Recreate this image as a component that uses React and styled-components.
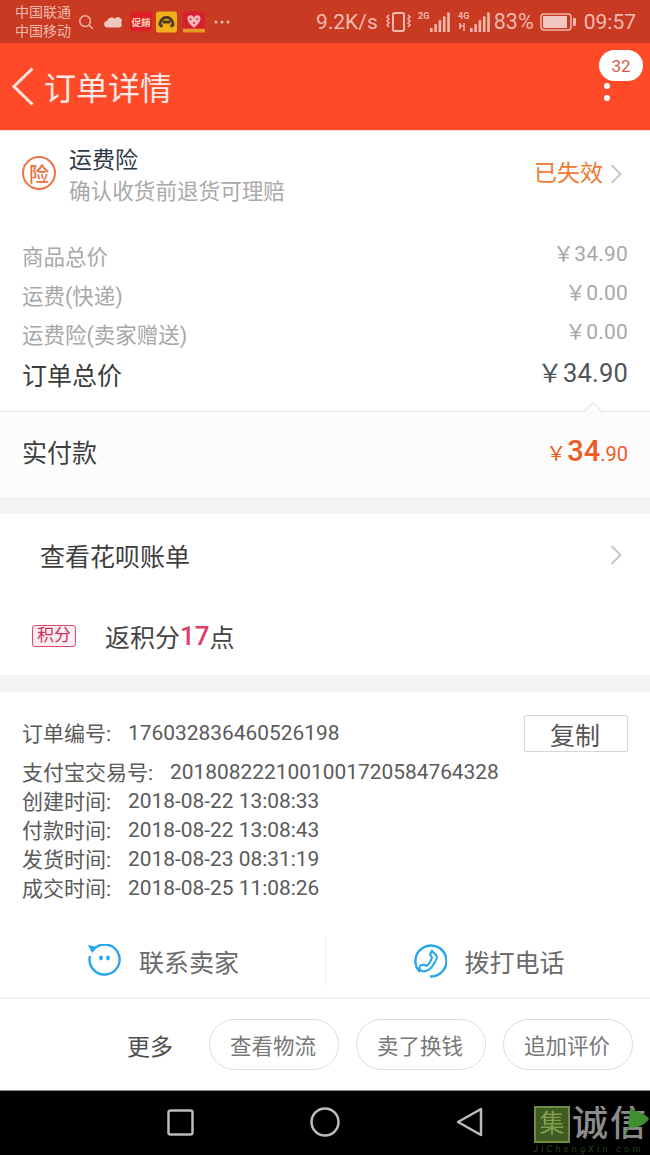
import styled, { createGlobalStyle } from "styled-components";

const GlobalStyle = createGlobalStyle`
  html, body {
    margin: 0;
    padding: 0;
    background: #fff;
    font-family: Roboto, "Noto Sans CJK SC", sans-serif;
  }
`;

const Page = styled.div`
  width: 650px;
  height: 1155px;
  overflow: hidden;
  position: relative;
  display: flex;
  flex-direction: column;
`;

const StatusBar = styled.div`
  height: 43px;
  background: #c93a23;
  color: #f0b9ae;
  display: flex;
  align-items: center;
  padding: 0 14px 0 15px;
  box-sizing: border-box;
`;

const Carriers = styled.div`
  width: 62px;
  font-size: 14px;
  line-height: 19px;
  margin-top: 1px;
  flex-shrink: 0;
`;

const StatusIcons = styled.div`
  display: flex;
  align-items: center;
  gap: 4px;
  flex: 1;
`;

const StatusText = styled.span`
  font-size: ${(p) => p.$size || "21px"};
  margin-left: ${(p) => p.$left || "0"};
  white-space: nowrap;
`;

const Header = styled.header`
  height: 87px;
  background: #fe4a29;
  display: flex;
  align-items: center;
  padding-left: 12px;
  position: relative;
`;

const Title = styled.h1`
  margin: 0 0 1px 10px;
  font-size: 32px;
  font-weight: 400;
  color: #ffe9e4;
`;

const Badge = styled.span`
  position: absolute;
  left: 599px;
  top: 7px;
  width: 44px;
  height: 31px;
  border-radius: 16px;
  background: #fff;
  color: #d9594a;
  font-size: 17px;
  display: flex;
  align-items: center;
  justify-content: center;
`;

const MenuDot = styled.i`
  position: absolute;
  left: 604px;
  top: ${(p) => p.$top}px;
  width: 6px;
  height: 6px;
  border-radius: 50%;
  background: #fff;
`;

const InsuranceRow = styled.section`
  height: 95px;
  box-sizing: border-box;
  border-top: 1px solid #fdd;
  padding: 12px 28px 0 22px;
  display: flex;
  align-items: flex-start;
`;

const RoundMark = styled.span`
  width: 34px;
  height: 34px;
  box-sizing: border-box;
  border: 2px solid #e9764a;
  border-radius: 50%;
  color: #e9703c;
  font-size: 20px;
  font-weight: 500;
  display: flex;
  align-items: center;
  justify-content: center;
  margin-top: 13px;
  flex-shrink: 0;
`;

const InsuranceText = styled.div`
  margin-left: 13px;
  flex: 1;
`;

const InsuranceName = styled.div`
  font-size: 23px;
  line-height: 33px;
  margin-top: 1px;
  color: #2e3a45;
`;

const InsuranceNote = styled.div`
  font-size: 21.6px;
  line-height: 30px;
  color: #a9a9a9;
`;

const ExpiredLink = styled.div`
  display: flex;
  align-items: center;
  gap: 7px;
  font-size: 23px;
  line-height: 34px;
  color: #ef7a33;
  margin: 14px 0 0;
`;

const PriceList = styled.section`
  height: 186px;
  box-sizing: border-box;
  padding: 11px 22px 0;
`;

const PriceRow = styled.div`
  display: flex;
  justify-content: space-between;
  align-items: center;
  height: 39px;
  font-size: ${(p) => (p.$total ? "25px" : "21.5px")};
  color: ${(p) => (p.$total ? "#3b3b3b" : "#a8a8a8")};
  margin-top: ${(p) => (p.$total ? "1px" : "0")};
`;

const Amount = styled.span`
  font-size: ${(p) => (p.$total ? "25.5px" : "21px")};
  color: ${(p) => (p.$total ? "#50555a" : "#a8a8a8")};
  margin-top: ${(p) => (p.$total ? "-6px" : "-7px")};
  letter-spacing: 0.2px;
`;

const PaidRow = styled.section`
  position: relative;
  height: 86px;
  box-sizing: border-box;
  background: #fcfcfc;
  border-top: 1px solid #e8e8e8;
  padding: 0 22px 8px;
  display: flex;
  justify-content: space-between;
  align-items: center;
  font-size: 25px;
  color: #3f3f3f;

  &::before {
    content: "";
    position: absolute;
    right: 50px;
    top: -7px;
    width: 13px;
    height: 13px;
    background: #fcfcfc;
    border-left: 1px solid #e4e4e4;
    border-top: 1px solid #e4e4e4;
    transform: rotate(45deg);
  }
`;

const PaidAmount = styled.span`
  color: #ee5a24;
  font-size: 20px;
  display: flex;
  align-items: baseline;
`;

const PaidMajor = styled.span`
  font-size: 29px;
  font-weight: 500;
  margin-left: 1px;
`;

const GapBar = styled.div`
  height: 17px;
  background: #f4f4f4;
`;

const BillRow = styled.section`
  height: 86px;
  box-sizing: border-box;
  padding: 0 28px 4px 40px;
  display: flex;
  justify-content: space-between;
  align-items: center;
  font-size: 25px;
  color: #3d3d3d;
`;

const PointsRow = styled.section`
  height: 75px;
  box-sizing: border-box;
  padding: 0 0 3px 32px;
  display: flex;
  align-items: center;
  font-size: 25px;
  color: #444;
`;

const PointsTag = styled.span`
  width: 44px;
  height: 22px;
  box-sizing: border-box;
  border: 1px solid #e2486f;
  border-radius: 3px;
  background: #fdeef2;
  color: #c9305a;
  font-size: 17px;
  line-height: 19px;
  text-align: center;
  margin-right: 29px;
`;

const PointsCount = styled.span`
  color: #e23d68;
  font-weight: 500;
  font-size: 26px;
`;

const OrderInfo = styled.section`
  height: 244px;
  box-sizing: border-box;
  padding: 22px 22px 0;
  color: #5a5a5a;
`;

const InfoRow = styled.div`
  display: flex;
  align-items: center;
  height: ${(p) => (p.$first ? "38px" : "29px")};
  margin-bottom: ${(p) => (p.$first ? "5px" : "0")};
  font-size: 21px;
  white-space: nowrap;
`;

const InfoLabel = styled.span`
  margin: 0 17px 2px 0;
`;

const InfoValue = styled.span`
  flex: 1;
  font-size: 20.9px;
`;

const CopyButton = styled.button`
  width: 104px;
  height: 37px;
  border: 1px solid #d6d6d6;
  border-radius: 2px;
  background: #fff;
  color: #555;
  font: inherit;
  font-size: 25px;
  padding: 0 2px 0 0;
`;

const ContactBar = styled.section`
  height: 63px;
  box-sizing: border-box;
  display: flex;
  border-bottom: 2px solid #f0f0f0;
  padding-bottom: 11px;
`;

const ContactItem = styled.div`
  flex: 1;
  display: flex;
  align-items: center;
  gap: 18px;
  padding-left: ${(p) => p.$left}px;
  font-size: 25px;
  color: #6b6b6b;
  border-left: ${(p) => (p.$divided ? "1px solid #ececec" : "none")};
`;

const ActionBar = styled.section`
  height: 91px;
  box-sizing: border-box;
  display: flex;
  align-items: center;
  padding-left: 127px;
`;

const MoreLabel = styled.span`
  font-size: 23px;
  color: #4e4e4e;
  width: 82px;
  flex-shrink: 0;
  white-space: nowrap;
`;

const PillButton = styled.button`
  width: 130px;
  height: 51px;
  box-sizing: border-box;
  border: 1px solid #dcdcdc;
  border-radius: 26px;
  background: #fff;
  color: #777;
  font: inherit;
  font-size: 21.5px;
  padding: 0 2px 0 0;
  margin-right: 17px;
  flex-shrink: 0;
`;

const NavBar = styled.nav`
  height: 65px;
  background: #000;
  border-top: 1px solid #888;
  box-sizing: border-box;
  display: flex;
  align-items: center;
  padding: 0 0 2px 167px;
  gap: 116px;
`;

const Watermark = styled.div`
  position: absolute;
  left: 533px;
  top: 1106px;
  width: 117px;
  height: 49px;
  overflow: hidden;
`;

const WatermarkBox = styled.span`
  position: absolute;
  left: 1px;
  top: 0;
  width: 32px;
  height: 33px;
  border: 2px solid #6f8f3f;
  background: #3f5a22;
  color: #7f9f4a;
  font-size: 25px;
  line-height: 32px;
  text-align: center;
`;

const WatermarkName = styled.span`
  position: absolute;
  left: 39px;
  top: -1px;
  font-size: 36px;
  line-height: 38px;
  color: #8c8c8c;
  font-weight: 500;
  white-space: nowrap;
  letter-spacing: 2px;
`;

const WatermarkSite = styled.span`
  position: absolute;
  left: 0;
  top: 38px;
  font-size: 9px;
  line-height: 11px;
  letter-spacing: 3.2px;
  color: #26431a;
  white-space: nowrap;
`;

const Leaf = styled.svg`
  position: absolute;
  left: 92px;
  top: 1px;
`;

const Chevron = ({ color = "#c4c4c4", w = 12, h = 20 }) => (
  <svg width={w} height={h} viewBox="0 0 12 20" fill="none">
    <path d="M1.5 1 L10.5 10 L1.5 19" stroke={color} strokeWidth="1.8" />
  </svg>
);

const rows = [
  ["支付宝交易号:", "2018082221001001720584764328"],
  ["创建时间:", "2018-08-22 13:08:33"],
  ["付款时间:", "2018-08-22 13:08:43"],
  ["发货时间:", "2018-08-23 08:31:19"],
  ["成交时间:", "2018-08-25 11:08:26"],
];

const signalBars = [3, 6, 9, 12, 15];

const Signal = ({ label, data, left }) => (
  <svg width="33" height="24" viewBox="0 0 33 24" style={{ marginLeft: left }}>
    <text x="0" y="9" fontSize="9" fontWeight="700" fill="#f0b9ae" fontFamily="Roboto, sans-serif">
      {label}
    </text>
    {data && <path d="M2 13v6M1 16h4M6 13v8" stroke="#f0b9ae" strokeWidth="1.5" />}
    {signalBars.map((b, i) => (
      <rect key={b} x={12 + i * 4.3} y={22 - b * 1.3} width="2.6" height={b * 1.3} fill="#f0b9ae" />
    ))}
  </svg>
);

export default function App() {
  return (
    <Page>
      <GlobalStyle />
      <StatusBar>
        <Carriers>
          中国联通
          <br />
          中国移动
        </Carriers>
        <StatusIcons>
          <svg width="16" height="16" viewBox="0 0 18 18" fill="none" stroke="#f0b9ae" strokeWidth="1.6" style={{ marginLeft: 1 }}>
            <circle cx="8" cy="8" r="6" />
            <path d="M12.5 12.5 L16.5 16.5" />
          </svg>
          <svg width="18" height="14" viewBox="0 0 20 14" fill="#f1c9c0" style={{ marginLeft: 6 }}>
            <path d="M4 13a3.500 3.500 0 0 1-.5-7A5 5 0 0 1 12 3.500 4 4 0 0 1 19 8a3 3 0 0 1-2 5z" />
          </svg>
          <svg width="22" height="21" viewBox="0 0 23 21" style={{ marginLeft: 4 }}>
            <rect width="23" height="21" rx="4" fill="#dd1f26" />
            <text x="11.500" y="15" fontSize="10" fontWeight="700" fill="#f9d4b8" textAnchor="middle" fontFamily="'Noto Sans CJK SC', sans-serif">
              促銷
            </text>
          </svg>
          <svg width="21" height="22" viewBox="0 0 22 22">
            <rect width="22" height="22" rx="3" fill="#f0b01c" />
            <path d="M4 15 C4 3 18 3 18 15 M4 15h3M15 15h3M7 11h8" fill="none" stroke="#4a3a22" strokeWidth="3" />
          </svg>
          <svg width="22" height="22" viewBox="0 0 23 22" style={{ marginLeft: 2 }}>
            <rect width="23" height="22" rx="3" fill="#d5202e" />
            <path d="M11.500 17 C3 11 3 4 8 4 c2 0 3 1 3.500 3 C12 5 13 4 15 4 c5 0 5 7-3.500 13z" fill="#f6b4ba" />
            <circle cx="8" cy="8" r="1" fill="#d5202e" />
            <circle cx="15" cy="8" r="1" fill="#d5202e" />
            <circle cx="11.500" cy="12" r="1" fill="#d5202e" />
            <rect y="18" width="23" height="4" fill="#e8962a" />
          </svg>
          <svg width="16" height="4" viewBox="0 0 16 4" fill="#f0b9ae" style={{ marginLeft: 5 }}>
            <circle cx="2" cy="2" r="1.500" />
            <circle cx="8" cy="2" r="1.500" />
            <circle cx="14" cy="2" r="1.500" />
          </svg>
        </StatusIcons>
        <StatusText>9.2K/s</StatusText>
        <svg width="26" height="22" viewBox="0 0 26 22" fill="none" stroke="#f0b9ae" strokeWidth="1.5" style={{ margin: "0 0 0 8px" }}>
          <rect x="7" y="2" width="11" height="18" rx="1.500" strokeWidth="2" />
          <path d="M3 4l-2 2 2 2-2 2 2 2-2 2 2 2M22 4l2 2-2 2 2 2-2 2 2 2-2 2" />
        </svg>
        <Signal label="2G" left={6} />
        <Signal label="4G" data left={7} />
        <StatusText $size="21.5px" $left="3px">83%</StatusText>
        <svg width="37" height="18" viewBox="0 0 37 18" style={{ margin: "0 7px 0 6px" }}>
          <rect x="1" y="1" width="30" height="16" rx="3" fill="none" stroke="#f0b9ae" strokeWidth="1.500" />
          <rect x="3" y="3" width="24" height="12" rx="1" fill="#f1c9c0" />
          <rect x="33" y="5" width="3" height="8" rx="1" fill="#f0b9ae" />
        </svg>
        <StatusText>09:57</StatusText>
      </StatusBar>

      <Header>
        <svg width="22" height="39" viewBox="0 0 22 39" fill="none">
          <path d="M20.500 1.500 L2 19.500 L20.500 37.500" stroke="#ffe4de" strokeWidth="3" />
        </svg>
        <Title>订单详情</Title>
        <Badge>32</Badge>
        <MenuDot $top={40} />
        <MenuDot $top={52} />
      </Header>

      <InsuranceRow>
        <RoundMark>险</RoundMark>
        <InsuranceText>
          <InsuranceName>运费险</InsuranceName>
          <InsuranceNote>确认收货前退货可理赔</InsuranceNote>
        </InsuranceText>
        <ExpiredLink>
          已失效
          <Chevron />
        </ExpiredLink>
      </InsuranceRow>

      <PriceList>
        <PriceRow>
          商品总价<Amount>￥34.90</Amount>
        </PriceRow>
        <PriceRow>
          运费(快递)<Amount>￥0.00</Amount>
        </PriceRow>
        <PriceRow>
          运费险(卖家赠送)<Amount>￥0.00</Amount>
        </PriceRow>
        <PriceRow $total>
          订单总价<Amount $total>￥34.90</Amount>
        </PriceRow>
      </PriceList>

      <PaidRow>
        实付款
        <PaidAmount>
          ￥<PaidMajor>34</PaidMajor>.90
        </PaidAmount>
      </PaidRow>
      <GapBar />

      <BillRow>
        查看花呗账单
        <Chevron />
      </BillRow>
      <PointsRow>
        <PointsTag>积分</PointsTag>
        返积分<PointsCount>17</PointsCount>点
      </PointsRow>
      <GapBar />

      <OrderInfo>
        <InfoRow $first>
          <InfoLabel>订单编号:</InfoLabel>
          <InfoValue>176032836460526198</InfoValue>
          <CopyButton>复制</CopyButton>
        </InfoRow>
        {rows.map(([label, value]) => (
          <InfoRow key={label}>
            <InfoLabel>{label}</InfoLabel>
            <InfoValue>{value}</InfoValue>
          </InfoRow>
        ))}
      </OrderInfo>

      <ContactBar>
        <ContactItem $left={87}>
          <svg width="34" height="34" viewBox="0 0 34 34" fill="none">
            <path d="M6 6 A15 15 0 1 1 3 12" stroke="#26a6e8" strokeWidth="2.400" />
            <path d="M1 1 L10 3 L5 9 Z" fill="#26a6e8" />
            <ellipse cx="14" cy="14" rx="1.800" ry="2.400" fill="#26a6e8" />
            <ellipse cx="21" cy="14" rx="1.800" ry="2.400" fill="#26a6e8" />
          </svg>
          联系卖家
        </ContactItem>
        <ContactItem $divided $left={87}>
          <svg width="34" height="34" viewBox="0 0 34 34" fill="none" stroke="#26a6e8" strokeWidth="2.400">
            <path d="M7 28 A15.500 15.500 0 1 1 17 32.500" />
            <path d="M19 7 l4.500 4.500 c1 1 0 4-2 7.500 s-5 7-8.500 8 c-3 1-6.500-.5-6.500-3 s3-4 5-3 l2 1 c2-1 5-6 5.500-8.500 l-2-3z" strokeWidth="2" />
          </svg>
          拨打电话
        </ContactItem>
      </ContactBar>

      <ActionBar>
        <MoreLabel>更多</MoreLabel>
        <PillButton>查看物流</PillButton>
        <PillButton>卖了换钱</PillButton>
        <PillButton>追加评价</PillButton>
      </ActionBar>

      <NavBar>
        <svg width="27" height="27" viewBox="0 0 27 27" fill="none" stroke="#bbb" strokeWidth="2.500">
          <rect x="1.500" y="1.500" width="24" height="24" rx="2" />
        </svg>
        <svg width="30" height="30" viewBox="0 0 30 30" fill="none" stroke="#bbb" strokeWidth="2.500">
          <circle cx="15" cy="15" r="13.500" />
        </svg>
        <svg width="27" height="30" viewBox="0 0 27 30" fill="none" stroke="#bbb" strokeWidth="2.500" strokeLinejoin="round">
          <path d="M25 2 V28 L2 15 Z" />
        </svg>
      </NavBar>

      <Watermark>
        <WatermarkBox>集</WatermarkBox>
        <WatermarkName>诚信</WatermarkName>
        <WatermarkSite>JiChengXin.com</WatermarkSite>
        <Leaf width="24" height="30" viewBox="0 0 24 30">
          <path d="M5 0 C10 6 20 5 24 12 C18 20 8 22 4 20 C2 14 6 6 5 0Z" fill="#3f8f2f" />
          <path d="M4 20 L0 28" stroke="#3f8f2f" strokeWidth="1.500" />
        </Leaf>
      </Watermark>
    </Page>
  );
}
